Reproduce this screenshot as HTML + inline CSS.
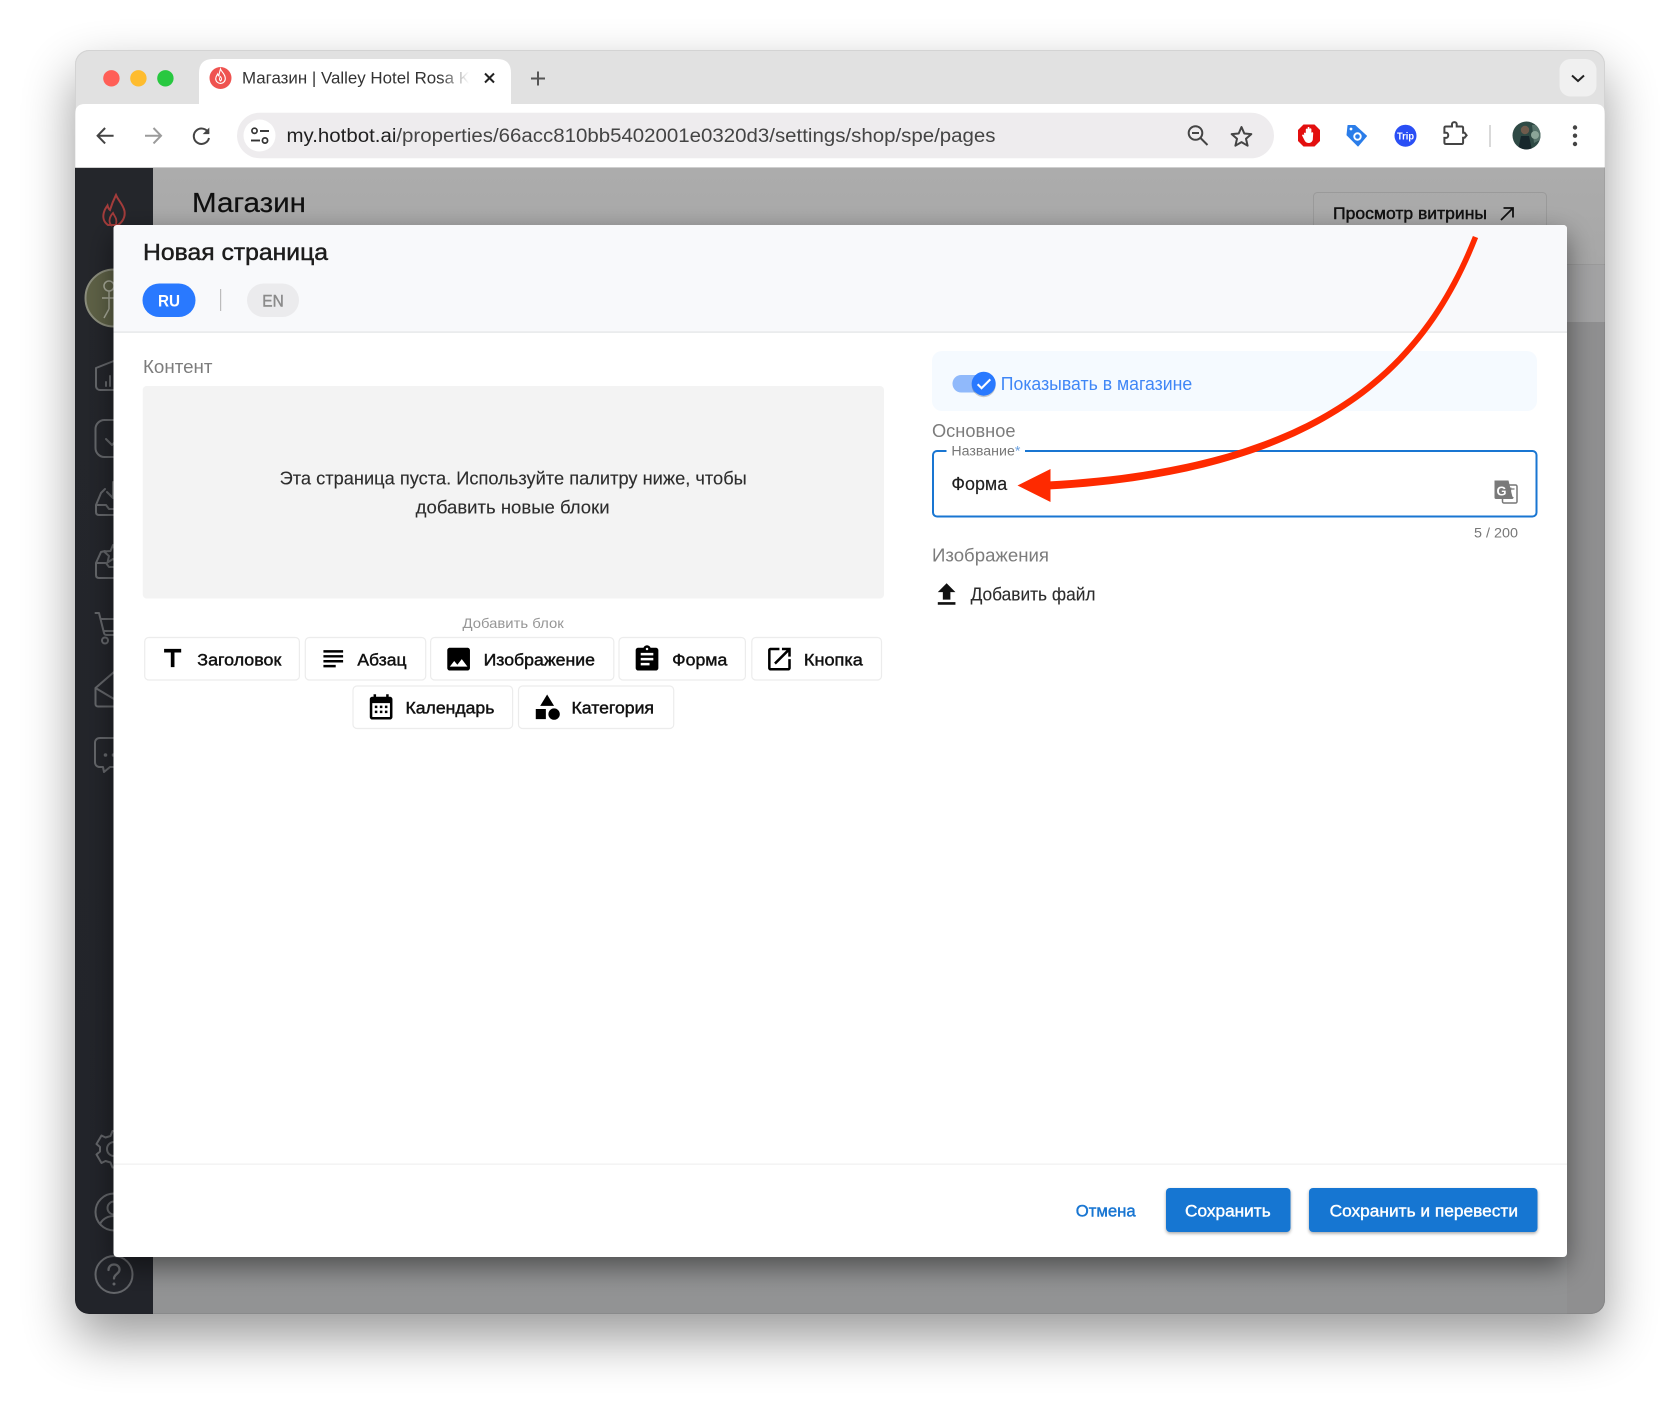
<!DOCTYPE html>
<html lang="ru">
<head>
<meta charset="utf-8">
<title>Магазин | Valley Hotel Rosa K</title>
<style>
html,body{margin:0;padding:0;background:#fff;width:1680px;height:1413px;overflow:hidden}
svg{display:block}
text{font-family:"Liberation Sans","Noto Sans CJK SC",sans-serif;white-space:pre}
</style>
</head>
<body>
<svg xmlns="http://www.w3.org/2000/svg" width="1680" height="1413" viewBox="0 0 1680 1413">
<defs>
<filter id="win" x="-10%" y="-10%" width="120%" height="125%"><feGaussianBlur in="SourceAlpha" stdDeviation="26"/><feOffset dy="24"/><feComponentTransfer><feFuncA type="linear" slope=".4"/></feComponentTransfer><feMerge><feMergeNode/><feMergeNode in="SourceGraphic"/></feMerge></filter>
<filter id="modal" x="-5%" y="-5%" width="110%" height="112%"><feGaussianBlur in="SourceAlpha" stdDeviation="14"/><feOffset dy="10"/><feComponentTransfer><feFuncA type="linear" slope=".48"/></feComponentTransfer><feMerge><feMergeNode/><feMergeNode in="SourceGraphic"/></feMerge></filter>
<filter id="btn" x="-10%" y="-20%" width="120%" height="150%"><feGaussianBlur in="SourceAlpha" stdDeviation="1.6"/><feOffset dy="1.5"/><feComponentTransfer><feFuncA type="linear" slope=".35"/></feComponentTransfer><feMerge><feMergeNode/><feMergeNode in="SourceGraphic"/></feMerge></filter>
<linearGradient id="back" x1="0" y1="0" x2="0" y2="1"><stop offset="0" stop-color="#acacac"/><stop offset=".1" stop-color="#a6a6a6"/><stop offset=".2" stop-color="#9e9e9f"/><stop offset="1" stop-color="#929394"/></linearGradient>
<linearGradient id="side" x1="0" y1="0" x2="0" y2="1"><stop offset="0" stop-color="#24262b"/><stop offset="1" stop-color="#22242a"/></linearGradient>
<linearGradient id="fade" gradientUnits="userSpaceOnUse" x1="440" y1="0" x2="469" y2="0"><stop offset="0" stop-color="#333"/><stop offset="1" stop-color="#333" stop-opacity="0"/></linearGradient>
<clipPath id="winclip"><rect x="75" y="50" width="1530" height="1264" rx="14"/></clipPath>
<clipPath id="avclip"><circle cx="1526.5" cy="135.5" r="14"/></clipPath>
</defs>

<!-- window -->
<rect x="75" y="50" width="1530" height="1264" rx="14" fill="#e1e1e1" filter="url(#win)"/>
<g clip-path="url(#winclip)">
  <rect x="75" y="50" width="1530" height="54" fill="#e1e1e1"/>
  <rect x="75" y="104" width="1530" height="64" fill="#fff" />
  <path d="M75 114Q75 104 85 104H184Q194 104 197 92L199 73Q200 59 214 59H496Q510 59 511 73L513 92Q516 104 526 104H1595Q1605 104 1605 114V50H75Z" fill="#e1e1e1"/>
  <path d="M199 104V73Q199 59 213 59H497Q511 59 511 73V104Z" fill="#fff"/>
  <rect x="75" y="167" width="1530" height="1" fill="#cfcfcf"/>
  <rect x="153" y="168" width="1452" height="1146" fill="url(#back)"/>
  <rect x="153" y="264" width="1452" height="1" fill="#9a9a9a"/>
  <rect x="1567" y="322" width="38" height="992" fill="#8f8f90"/>
  <rect x="1567" y="265" width="38" height="57" fill="#a2a2a3"/>
  <rect x="75" y="168" width="78" height="1146" fill="url(#side)"/>
</g>
<rect x="75.5" y="50.5" width="1529" height="1263" rx="14" fill="none" stroke="#000" stroke-opacity=".06"/>

<!-- traffic lights -->
<circle cx="111.4" cy="78.3" r="8.2" fill="#ff5f57"/>
<circle cx="138.4" cy="78.3" r="8.2" fill="#febc2e"/>
<circle cx="165.4" cy="78.3" r="8.2" fill="#28c840"/>

<!-- tab -->
<circle cx="220.5" cy="78" r="11" fill="#ef5350"/>
<path d="M220.5 69c.8 3 4.800 4.800 4.800 9.500a4.800 4.800 0 0 1-9.600.3c0-2.200 1.200-3.500 2-4.800.2 1 .6 1.600 1.200 2 .2-2.400.9-4.800 1.600-7z" fill="none" stroke="#fff" stroke-width="1.100"/>
<path d="M220.500 81c-1.300-1.200-1.300-2.800 0-4.500 1.300 1.700 1.300 3.300 0 4.500z" fill="none" stroke="#fff" stroke-width="1"/>
<text x="242" y="83.7" font-size="16.5" textLength="228" lengthAdjust="spacingAndGlyphs" fill="url(#fade)">Магазин | Valley Hotel Rosa K</text>
<path d="M485 73.5l9 9M494 73.5l-9 9" stroke="#222" stroke-width="2" fill="none"/>
<path d="M538 71.500v14M531 78.500h14" stroke="#555" stroke-width="2" fill="none"/>
<rect x="1559.5" y="59" width="37" height="37.5" rx="11" fill="#f0f0f0"/>
<path d="M1572 75.5l6 5.5 6-5.5" stroke="#222" stroke-width="2" fill="none"/>

<!-- toolbar nav -->
<path d="M113 135.7H97M104.500 128l-7.500 7.700 7.500 7.700" stroke="#444" stroke-width="2" fill="none" transform="translate(.6 0)"/>
<path d="M145 135.700h16M153.500 128l7.500 7.700-7.500 7.700" stroke="#9b9b9b" stroke-width="2" fill="none"/>
<path d="M208.500 133a7.700 7.700 0 1 0 .5 5" stroke="#444" stroke-width="2" fill="none"/>
<path d="M209.300 127.500v6.600h-6.600z" fill="#444"/>
<rect x="237" y="112.700" width="1037" height="45.600" rx="22.800" fill="#eeecee"/>
<circle cx="259.500" cy="135.500" r="16" fill="#fff"/>
<circle cx="254.500" cy="130.800" r="2.600" fill="none" stroke="#333" stroke-width="1.700"/>
<path d="M260 131h9" stroke="#333" stroke-width="1.900"/>
<circle cx="265" cy="140.500" r="2.600" fill="none" stroke="#333" stroke-width="1.700"/>
<path d="M251 140.500h9" stroke="#333" stroke-width="1.900"/>
<text x="286.500" y="142" font-size="19" textLength="709" lengthAdjust="spacingAndGlyphs"><tspan fill="#1f1f1f">my.hotbot.ai</tspan><tspan fill="#444">/properties/66acc810bb5402001e0320d3/settings/shop/spe/pages</tspan></text>

<!-- zoom / star -->
<circle cx="1195.500" cy="133" r="6.800" fill="none" stroke="#444" stroke-width="2"/>
<path d="M1192 133h7M1200.500 138l7 7" stroke="#444" stroke-width="2" fill="none"/>
<path d="M1241.500 127l2.800 6.500 7 .6-5.300 4.700 1.600 6.900-6.100-3.600-6.100 3.600 1.600-6.900-5.300-4.700 7-.6z" fill="none" stroke="#444" stroke-width="2" stroke-linejoin="round"/>

<!-- extensions -->
<polygon points="1303.500,124.500 1314.500,124.500 1320,130 1320,141 1314.500,146.500 1303.500,146.500 1298,141 1298,130" fill="#e30f0f"/>
<path d="M1304 133.500c0-1.200 1.700-1.200 1.800 0v-4c0-1.200 1.800-1.200 1.800 0v-1.600c0-1.200 1.900-1.200 1.900 0v1.400c.1-1.200 1.900-1.200 1.900 0v3.800c.1-1.200 1.800-1.200 1.800 0l-.4 6.500c-.5 2-2 3.400-4.300 3.400-2 0-3.200-1-4-2.700l-2.300-4.500c-.5-1.100 1-1.900 1.700-.8l.3.500z" fill="#fff"/>
<path d="M1348 125.500h7l11.500 10.500-8.500 10-11-11z" fill="#2b7de9" stroke="#2b7de9" stroke-width="1" stroke-linejoin="round"/>
<circle cx="1357.500" cy="136.500" r="4.200" fill="#fff"/><circle cx="1357.500" cy="136.500" r="2.300" fill="#2b7de9"/>
<circle cx="1351" cy="129" r="1.400" fill="#fff"/>
<circle cx="1405.500" cy="135.700" r="11" fill="#2a4ff5"/>
<text x="1397" y="139.500" font-size="10.500" font-weight="bold" fill="#fff" textLength="17" lengthAdjust="spacingAndGlyphs">Trip</text>
<path d="M1452 126.500v-2.200c0-2.900 4.700-2.900 4.700 0v2.200h4.900c1 0 1.500.6 1.500 1.500v4.800h1.500l2 2.500-2 2.400h-1.500v4.800c0 .9-.5 1.500-1.500 1.500h-15.700c-.9 0-1.500-.6-1.500-1.500v-4.600h1.800c2.700 0 2.700-5.200 0-5.200h-1.800v-4.700c0-.9.600-1.500 1.500-1.500z" fill="none" stroke="#444" stroke-width="2"/>
<rect x="1489" y="125" width="2" height="22" fill="#d9d9d9"/>
<circle cx="1526.500" cy="135.500" r="14" fill="#2f4a45"/>
<g clip-path="url(#avclip)">
  <path d="M1512 125h30v14l-8 4-2-18z" fill="#56726a"/>
  <circle cx="1535" cy="135" r="4" fill="#8ba598"/>
  <circle cx="1525" cy="130" r="4.200" fill="#6f5b4c"/>
  <path d="M1518 150l3-14h8l3 14z" fill="#17272c"/>
</g>
<circle cx="1575" cy="127.500" r="2.200" fill="#444"/><circle cx="1575" cy="135.700" r="2.200" fill="#444"/><circle cx="1575" cy="144" r="2.200" fill="#444"/>

<!-- page behind modal -->
<text x="192" y="212" font-size="28" textLength="114" lengthAdjust="spacingAndGlyphs" fill="#0f0f0f" stroke="#0f0f0f" stroke-width=".2">Магазин</text>
<rect x="1313.500" y="192.500" width="233" height="60" rx="4" fill="none" stroke="#9a9a9a"/>
<text x="1333" y="219" font-size="17" textLength="154" lengthAdjust="spacingAndGlyphs" fill="#111" stroke="#111" stroke-width=".45">Просмотр витрины</text>
<path d="M1501 220l12-12M1503.500 208h9.500v9.500" stroke="#111" stroke-width="1.800" fill="none"/>

<!-- sidebar icons -->
<path d="M116 195c2.500 6 7 9 8.500 16 1 6-2 11-6.500 14h-10c-4.500-3-5.500-8-4-13 .8-3 2.200-4.500 3.500-6.500.5 2 1 3.500 2.500 4.500 1.500-5 3-9 6-15z" fill="none" stroke="#a33c3b" stroke-width="2"/>
<path d="M112 226c-3.500-3-3.500-8 1-13 1.500 3.500 4.500 5.500 3 11" fill="none" stroke="#a33c3b" stroke-width="1.800"/>
<circle cx="114" cy="298" r="28.500" fill="#5e6146" stroke="#8b8d7c" stroke-width="2"/>
<circle cx="109" cy="286" r="5" fill="none" stroke="#a9ab9a" stroke-width="1.500"/>
<path d="M109 291v18M102 298h14M104 318l5-9" stroke="#a9ab9a" stroke-width="1.500" fill="none"/>
<g fill="none" stroke="#64666a" stroke-width="2" stroke-linejoin="round" stroke-linecap="round">
  <path d="M96 368v18c0 2.500 2 4 4 4h30c2 0 4-1.500 4-4v-18l-15-7.500h-4z"/>
  <path d="M106 386v-4M110 386v-10"/>
  <rect x="95.500" y="420" width="37" height="37" rx="9"/>
  <path d="M106 439l6 6 10-11"/>
  <path d="M96 505v7c0 2 1 3 3 3h30c2 0 3-1 3-3v-7l-5-12h-8M105 489l-4 4-5 12h10l3 4h10l3-4h10"/>
  <path d="M113 482v16l-6-6M113 498l6-6" />
  <path d="M96 563v12c0 2 1 3 3 3h30c2 0 3-1 3-3v-12l-5-12M105 551l-4 1-5 11h10l3 4h10l3-4h10"/>
  <path d="M113 545l2.500 6 6.500.5-5 4.500 1.500 6.500-5.500-3.500-5.500 3.500 1.500-6.500-5-4.500 6.500-.5z"/>
  <path d="M95.500 613h3.500l5 20c.4 1.500 1 2 3 2h22M101 619h31l-4 12h-24"/>
  <circle cx="105" cy="640.500" r="3"/><circle cx="126" cy="640.500" r="3"/>
  <path d="M95.500 688v16c0 1.500 1 2.500 2.500 2.500h32c1.500 0 2.500-1 2.500-2.500v-16l-18.500-16zM95.500 688l18.500 11 18.500-11"/>
  <path d="M100 738h27c3 0 5 2 5 5v19c0 3-2 5-5 5h-17l-6 5-1-5h-3c-3 0-5-2-5-5v-19c0-3 2-5 5-5z"/>
  <path d="M108.500 1131h11l2 5 5 1.500 4-2 5 8.500-3.500 3v4.500l3.500 3-5 8.500-4-2-5 1.500-2 5h-11l-2-5-5-1.500-4 2-5-8.500 3.500-3v-4.500l-3.500-3 5-8.500 4 2 5-1.500z" transform="translate(4 0)"/>
  <circle cx="114" cy="1149" r="7"/>
  <circle cx="114" cy="1212" r="18.500"/>
  <circle cx="114" cy="1208" r="6.500"/>
  <path d="M100 1224c3-6 9-8 14-8s11 2 14 8"/>
  <circle cx="114" cy="1274.500" r="18.500"/>
  <path d="M108.500 1270c0-3.500 2.500-5.500 5.500-5.500s5.500 2 5.500 5c0 4.500-5.500 4.500-5.500 9" stroke-width="2.300"/>
</g>
<circle cx="113.500" cy="755" r="1.800" fill="#64666a"/><circle cx="105.500" cy="755" r="1.800" fill="#64666a"/>
<circle cx="114" cy="1284" r="1.500" fill="#64666a"/>

<!-- modal -->
<rect x="113.500" y="225" width="1453.500" height="1032" rx="4" fill="#fff" filter="url(#modal)"/>
<path d="M113.500 332V229q0-4 4-4H1563q4 0 4 4V332Z" fill="#f8f9fb"/>
<rect x="113.500" y="331.500" width="1453.500" height="1.200" fill="#e2e3e5"/>
<text x="143" y="260" font-size="23" textLength="185" lengthAdjust="spacingAndGlyphs" fill="#1c1c1c" stroke="#1c1c1c" stroke-width=".45">Новая страница</text>
<rect x="142.500" y="283.500" width="53" height="33.500" rx="16.700" fill="#2979ff"/>
<text x="169" y="306.500" font-size="16.500" font-weight="bold" text-anchor="middle" fill="#fff" textLength="22" lengthAdjust="spacingAndGlyphs">RU</text>
<rect x="220" y="289" width="1.200" height="22" fill="#bcbcbc"/>
<rect x="247" y="283.500" width="52" height="33.500" rx="16.700" fill="#ebebed"/>
<text x="273" y="306.500" font-size="16.500" text-anchor="middle" fill="#8a8a8a" stroke="#8a8a8a" stroke-width=".4" textLength="21.500" lengthAdjust="spacingAndGlyphs">EN</text>

<!-- left column -->
<text x="143" y="373" font-size="18" textLength="69.500" lengthAdjust="spacingAndGlyphs" fill="#7c7c7c">Контент</text>
<rect x="142.700" y="386" width="741.300" height="212.500" rx="4" fill="#f3f3f3"/>
<text x="279.600" y="484.500" font-size="18" textLength="467.200" lengthAdjust="spacingAndGlyphs" fill="#2c2c2c" stroke="#2c2c2c" stroke-width=".12">Эта страница пуста. Используйте палитру ниже, чтобы</text>
<text x="415.700" y="513.500" font-size="18" textLength="193.900" lengthAdjust="spacingAndGlyphs" fill="#2c2c2c" stroke="#2c2c2c" stroke-width=".12">добавить новые блоки</text>
<text x="462.500" y="628" font-size="14" textLength="101.200" lengthAdjust="spacingAndGlyphs" fill="#969696">Добавить блок</text>

<g fill="#fff" stroke="#ececec" stroke-width="1.200">
  <rect x="144.700" y="637.500" width="154.700" height="42.500" rx="4"/>
  <rect x="305.300" y="637.500" width="120.400" height="42.500" rx="4"/>
  <rect x="430.600" y="637.500" width="183.200" height="42.500" rx="4"/>
  <rect x="619" y="637.500" width="126.400" height="42.500" rx="4"/>
  <rect x="751.800" y="637.500" width="129.700" height="42.500" rx="4"/>
  <rect x="353" y="686" width="159.600" height="42.500" rx="4"/>
  <rect x="518.500" y="686" width="155.200" height="42.500" rx="4"/>
</g>
<g font-size="17" fill="#111" stroke="#111" stroke-width=".45">
  <text x="197.300" y="665.700" textLength="84" lengthAdjust="spacingAndGlyphs">Заголовок</text>
  <text x="357.400" y="665.700" textLength="49.100" lengthAdjust="spacingAndGlyphs">Абзац</text>
  <text x="483.600" y="665.700" textLength="111.400" lengthAdjust="spacingAndGlyphs">Изображение</text>
  <text x="672.200" y="665.700" textLength="55.100" lengthAdjust="spacingAndGlyphs">Форма</text>
  <text x="803.900" y="665.700" textLength="58.900" lengthAdjust="spacingAndGlyphs">Кнопка</text>
  <text x="405.500" y="713.700" textLength="88.900" lengthAdjust="spacingAndGlyphs">Календарь</text>
  <text x="571.500" y="713.700" textLength="82.500" lengthAdjust="spacingAndGlyphs">Категория</text>
</g>
<g fill="#000">
  <path transform="translate(158 644) scale(1.220)" d="M5 4v3h5.500v12h3V7H19V4z"/>
  <path transform="translate(318.500 644) scale(1.230)" d="M14 17H4v2h10v-2zm6-8H4v2h16V9zM4 15h16v-2H4v2zM4 5v2h16V5H4z"/>
  <path transform="translate(443.500 644) scale(1.260)" d="M21 19V5c0-1.100-.9-2-2-2H5c-1.100 0-2 .9-2 2v14c0 1.100.9 2 2 2h14c1.100 0 2-.9 2-2zM8.500 13.500l2.500 3.010L14.500 12l4.500 6H5l3.500-4.500z"/>
  <path transform="translate(631.900 644) scale(1.260)" d="M19 3h-4.180C14.400 1.840 13.300 1 12 1c-1.300 0-2.400.84-2.820 2H5c-1.100 0-2 .9-2 2v14c0 1.100.9 2 2 2h14c1.100 0 2-.9 2-2V5c0-1.100-.9-2-2-2zm-7 0c.55 0 1 .45 1 1s-.45 1-1 1-1-.45-1-1 .45-1 1-1zm2 14H7v-2h7v2zm3-4H7v-2h10v2zm0-4H7V7h10v2z"/>
  <path transform="translate(764.300 644) scale(1.260)" d="M19 19H5V5h7V3H5c-1.110 0-2 .9-2 2v14c0 1.100.89 2 2 2h14c1.100 0 2-.9 2-2v-7h-2v7zM14 3v2h3.590l-9.830 9.830 1.410 1.410L19 6.410V10h2V3h-7z"/>
  <path transform="translate(366 693) scale(1.260)" d="M19 3h-1V1h-2v2H8V1H6v2H5c-1.110 0-1.990.9-1.990 2L3 19c0 1.100.89 2 2 2h14c1.100 0 2-.9 2-2V5c0-1.100-.9-2-2-2zm0 16H5V8h14v11zM7 10h2v2H7zm4 0h2v2h-2zm4 0h2v2h-2zM7 14h2v2H7zm4 0h2v2h-2zm4 0h2v2h-2z"/>
  <path transform="translate(532 692) scale(1.260)" d="M12 2l-5.500 9h11zM3 13.500h8v8H3z"/>
  <circle cx="554.100" cy="714.100" r="5.700"/>
</g>

<!-- right column -->
<rect x="932" y="351" width="605" height="60" rx="10" fill="#f5faff"/>
<rect x="952.500" y="375" width="34" height="17.500" rx="8.700" fill="#90b9fb"/>
<circle cx="983.700" cy="385.200" r="12" fill="#000" fill-opacity=".2"/>
<circle cx="983.700" cy="383.700" r="12" fill="#2979ff"/>
<path transform="translate(974.700 374.800) scale(.76)" d="M9 16.170L4.830 12l-1.420 1.410L9 19 21 7l-1.410-1.410z" fill="#fff" stroke="#fff" stroke-width=".7"/>
<text x="1000.800" y="390" font-size="18" textLength="191.400" lengthAdjust="spacingAndGlyphs" fill="#3f86f6">Показывать в магазине</text>
<text x="932" y="437" font-size="18" textLength="83.500" lengthAdjust="spacingAndGlyphs" fill="#7c7c7c">Основное</text>

<rect x="933" y="451" width="603.500" height="65.500" rx="4" fill="#fff" stroke="#1976d2" stroke-width="2"/>
<rect x="946.500" y="446" width="78.500" height="10" fill="#fff"/>
<text x="951.400" y="455.700" font-size="13.500" textLength="69" lengthAdjust="spacingAndGlyphs" fill="#777">Название<tspan fill="#6aa1e0">*</tspan></text>
<text x="951.400" y="490" font-size="18" textLength="55.800" lengthAdjust="spacingAndGlyphs" fill="#1f1f1f" stroke="#1f1f1f" stroke-width=".15">Форма</text>
<rect x="1502.500" y="485" width="14.500" height="18" rx="1.500" fill="#fff" stroke="#777" stroke-width="1.500"/>
<path d="M1494.500 480.500h14l4.500 18.500h-17q-1.500 0-1.500-1.500z" fill="#7a7a7a"/>
<text x="1496.500" y="495.500" font-size="13" font-weight="bold" fill="#fff" textLength="10" lengthAdjust="spacingAndGlyphs">G</text>
<path d="M1507 489h7.500M1510.800 487.500v1.500c-.3 3-1.800 6-4 8M1508 492c1 2 3 4.500 5.500 6" stroke="#777" stroke-width="1.200" fill="none"/>
<text x="1474" y="537.700" font-size="14" textLength="44" lengthAdjust="spacingAndGlyphs" fill="#777">5 / 200</text>
<text x="932" y="561.700" font-size="18" textLength="117" lengthAdjust="spacingAndGlyphs" fill="#7c7c7c">Изображения</text>
<path transform="translate(931.500 579.500) scale(1.260)" d="M9 16h6v-6h4l-7-7-7 7h4zm-4 2h14v2H5z" fill="#111"/>
<text x="970.600" y="600.700" font-size="18" textLength="124.900" lengthAdjust="spacingAndGlyphs" fill="#2c2c2c" stroke="#2c2c2c" stroke-width=".12">Добавить файл</text>

<!-- footer -->
<rect x="113.500" y="1163.500" width="1453.500" height="1.200" fill="#f0f0f0"/>
<text x="1075.700" y="1216.500" font-size="17" textLength="60" lengthAdjust="spacingAndGlyphs" fill="#1976d2" stroke="#1976d2" stroke-width=".45">Отмена</text>
<rect x="1166" y="1188" width="124.500" height="44" rx="4" fill="#1976d2" filter="url(#btn)"/>
<text x="1185" y="1216.500" font-size="17" textLength="85.700" lengthAdjust="spacingAndGlyphs" fill="#fff" stroke="#fff" stroke-width=".4">Сохранить</text>
<rect x="1309" y="1188" width="228.500" height="44" rx="4" fill="#1976d2" filter="url(#btn)"/>
<text x="1329.600" y="1216.500" font-size="17" textLength="188.400" lengthAdjust="spacingAndGlyphs" fill="#fff" stroke="#fff" stroke-width=".4">Сохранить и перевести</text>

<!-- red arrow -->
<path d="M1478.100 238C1427.600 367 1326 473.600 1048.200 489.500L1047.800 481.500C1324 466.400 1422.400 363 1472.900 236Z" fill="#fe2a00"/>
<polygon points="1017.500,485.500 1050.500,469 1050.500,502" fill="#fe2a00"/>
</svg>
</body>
</html>
